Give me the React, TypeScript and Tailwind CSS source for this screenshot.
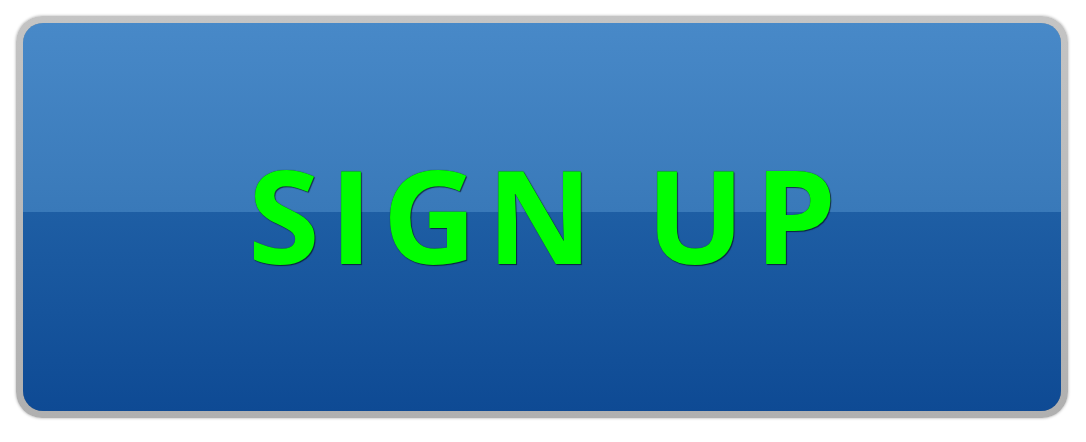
export default function App() {
  return (
    <div className="w-[1086px] h-[442px] bg-white relative">
      <div className="absolute left-[16px] top-[16px] w-[1052px] h-[402px] rounded-[26px] bg-[linear-gradient(to_bottom,#c4c4c4,#b0b0b0)] p-[7px] shadow-[0_0_3px_rgba(0,0,0,0.35)]">
        <div className="w-full h-full rounded-[20px] overflow-hidden flex flex-col shadow-[inset_0_0_2px_rgba(0,0,0,0.5)] relative">
          <div className="h-[189px] bg-[linear-gradient(to_bottom,#4889c8,#3979b9)]" />
          <div className="flex-1 bg-[linear-gradient(to_bottom,#1e5ea4,#0e4a94)]" />
          <div className="absolute inset-0 flex items-center justify-center pb-[6px]">
            <span
              className="text-[#00ff00] font-bold text-[130px] tracking-[10px] leading-none pl-[10px] [text-shadow:0_0_1px_#0b3a20,1px_1px_1px_rgba(0,0,0,0.6)]"
              style={{ fontFamily: '"Open Sans", sans-serif' }}
            >
              SIGN UP
            </span>
          </div>
        </div>
      </div>
    </div>
  );
}
